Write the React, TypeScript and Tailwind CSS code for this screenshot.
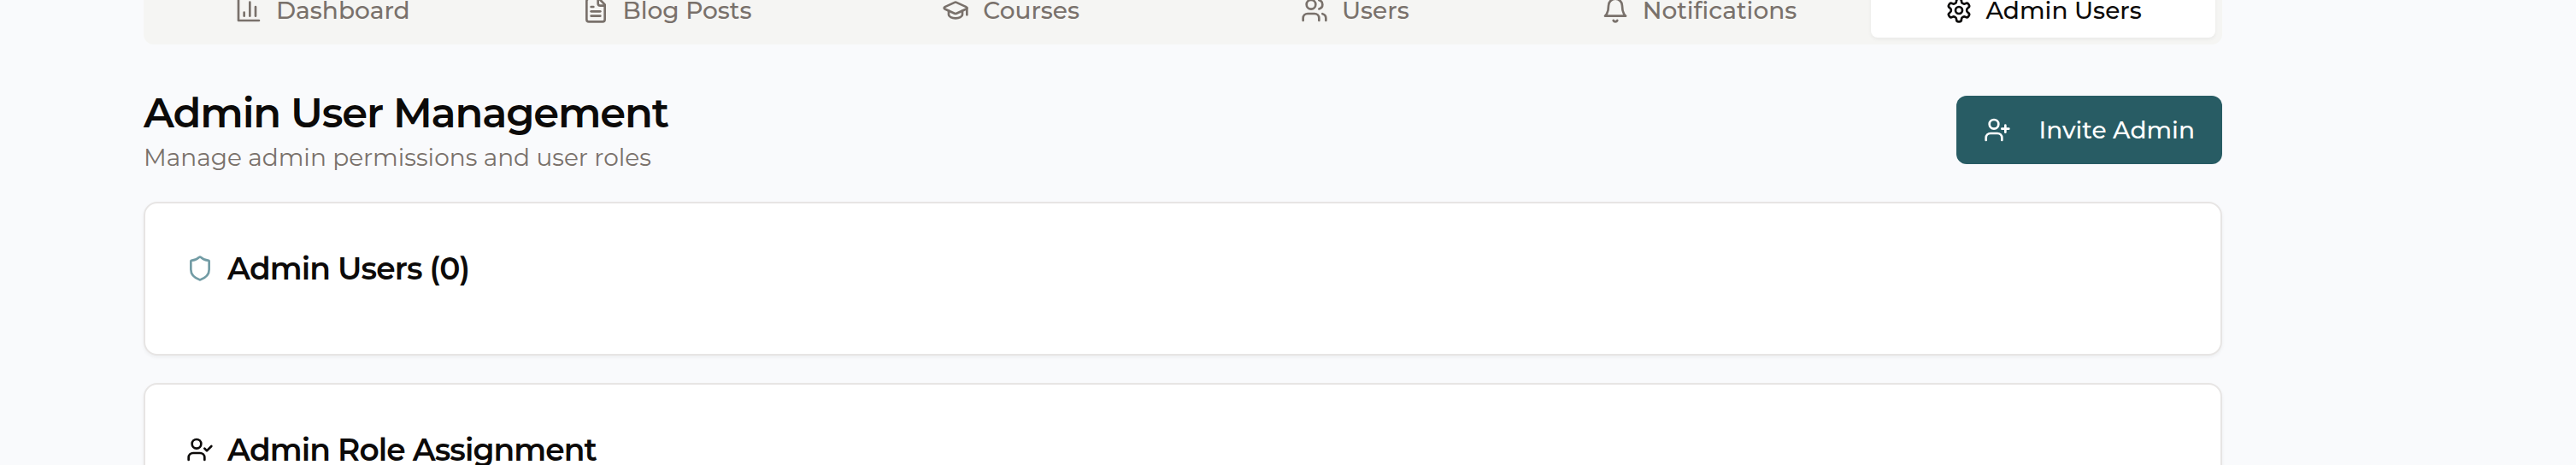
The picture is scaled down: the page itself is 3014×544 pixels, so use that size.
import type { ReactNode } from "react";
import { GraduationCap, Shield, UserCheck, UserPlus, Users } from "lucide-react";

type IconProps = { className?: string };

function OutlineIcon({ className, children }: IconProps & { children: ReactNode }) {
  return (
    <svg
      viewBox="0 0 24 24"
      fill="none"
      stroke="currentColor"
      strokeWidth="2"
      strokeLinecap="round"
      strokeLinejoin="round"
      className={className}
      aria-hidden="true"
    >
      {children}
    </svg>
  );
}

function BarChartIcon({ className }: IconProps) {
  return (
    <OutlineIcon className={className}>
      <path d="M3 3v18h18" />
      <path d="M18 17V9" />
      <path d="M13 17V5" />
      <path d="M8 17v-3" />
    </OutlineIcon>
  );
}

function FileIcon({ className }: IconProps) {
  return (
    <OutlineIcon className={className}>
      <path d="M15 2H6a2 2 0 0 0-2 2v16a2 2 0 0 0 2 2h12a2 2 0 0 0 2-2V7Z" />
      <path d="M14 2v4a2 2 0 0 0 2 2h4" />
      <path d="M10 9H8" />
      <path d="M16 13H8" />
      <path d="M16 17H8" />
    </OutlineIcon>
  );
}

function BellIcon({ className }: IconProps) {
  return (
    <OutlineIcon className={className}>
      <path d="M6 8a6 6 0 0 1 12 0c0 7 3 9 3 9H3s3-2 3-9" />
      <path d="M10.3 21a1.94 1.94 0 0 0 3.4 0" />
    </OutlineIcon>
  );
}

function GearIcon({ className }: IconProps) {
  return (
    <OutlineIcon className={className}>
      <path d="M12.22 2h-.44a2 2 0 0 0-2 2v.18a2 2 0 0 1-1 1.73l-.43.25a2 2 0 0 1-2 0l-.15-.08a2 2 0 0 0-2.73.73l-.22.38a2 2 0 0 0 .73 2.73l.15.1a2 2 0 0 1 1 1.72v.51a2 2 0 0 1-1 1.74l-.15.09a2 2 0 0 0-.73 2.73l.22.38a2 2 0 0 0 2.73.73l.15-.08a2 2 0 0 1 2 0l.43.25a2 2 0 0 1 1 1.73V20a2 2 0 0 0 2 2h.44a2 2 0 0 0 2-2v-.18a2 2 0 0 1 1-1.73l.43-.25a2 2 0 0 1 2 0l.15.08a2 2 0 0 0 2.73-.73l.22-.39a2 2 0 0 0-.73-2.73l-.15-.08a2 2 0 0 1-1-1.74v-.5a2 2 0 0 1 1-1.74l.15-.09a2 2 0 0 0 .73-2.73l-.22-.38a2 2 0 0 0-2.73-.73l-.15.08a2 2 0 0 1-2 0l-.43-.25a2 2 0 0 1-1-1.73V4a2 2 0 0 0-2-2z" />
      <circle cx="12" cy="12" r="3" />
    </OutlineIcon>
  );
}

const tabs = [
  { label: "Dashboard", icon: BarChartIcon },
  { label: "Blog Posts", icon: FileIcon },
  { label: "Courses", icon: GraduationCap },
  { label: "Users", icon: Users },
  { label: "Notifications", icon: BellIcon },
  { label: "Admin Users", icon: GearIcon, active: true },
];

function Card({ icon, title }: { icon: ReactNode; title: string }) {
  return (
    <section className="rounded-2xl border-2 border-stone-200 bg-white px-12 pt-12 pb-[72px] shadow-[0_2px_4px_rgba(0,0,0,0.05)]">
      <h2 className="flex items-center gap-4 text-[36px] leading-[56px] font-semibold tracking-tight">
        {icon}
        {title}
      </h2>
    </section>
  );
}

export default function App() {
  return (
    <div className="h-screen overflow-hidden bg-[#f9fafc] font-[Montserrat,Inter,sans-serif] text-stone-950">
      <main className="-mt-7 flex flex-col pr-[414px] pl-[168px]">
        <div role="tablist" className="grid grid-cols-6 rounded-xl bg-[#f5f5f3] p-2">
          {tabs.map(({ label, icon: Icon, active }) => (
            <button
              key={label}
              type="button"
              role="tab"
              aria-selected={!!active}
              className={
                active
                  ? "flex items-center justify-center gap-4 rounded-lg bg-white py-3 text-[28px] leading-10 font-medium shadow-[0_2px_4px_rgba(0,0,0,0.05)]"
                  : "flex items-center justify-center gap-4 rounded-lg py-3 text-[28px] leading-10 font-medium text-stone-500"
              }
            >
              <Icon className="size-8 shrink-0" />
              {label}
            </button>
          ))}
        </div>

        <header className="mt-12 flex items-center justify-between">
          <div>
            <h1 className="text-[48px] leading-[64px] font-semibold tracking-tight">
              Admin User Management
            </h1>
            <p className="text-[28px] leading-10 text-stone-500">
              Manage admin permissions and user roles
            </p>
          </div>
          <button
            type="button"
            className="flex items-center gap-8 rounded-xl bg-[#285c64] px-8 py-5 text-[28px] leading-10 font-medium text-white"
          >
            <UserPlus className="size-8 shrink-0" />
            Invite Admin
          </button>
        </header>

        <div className="mt-8 flex flex-col gap-8">
          <Card
            icon={<Shield className="size-8 shrink-0 text-[#729ca5]" />}
            title="Admin Users (0)"
          />
          <Card icon={<UserCheck className="size-8 shrink-0" />} title="Admin Role Assignment" />
        </div>
      </main>
    </div>
  );
}
